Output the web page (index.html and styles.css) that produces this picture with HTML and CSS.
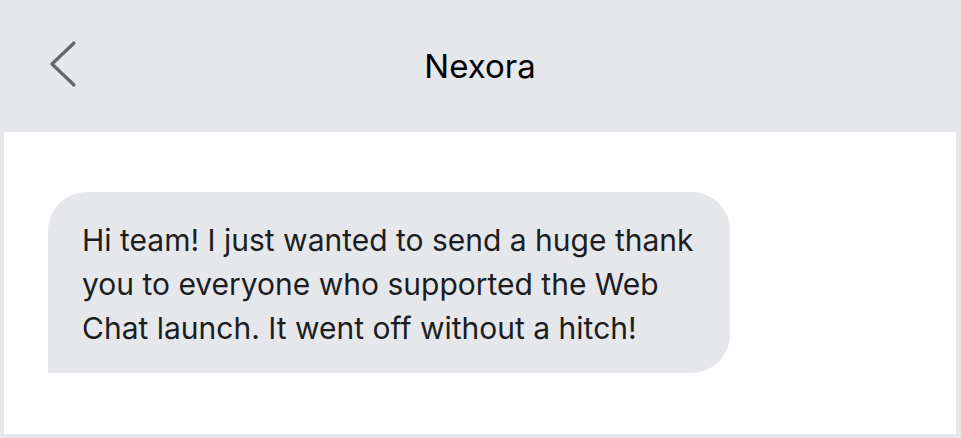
FILE: index.html
```html
<!DOCTYPE html>
<html lang="en">
<head>
<meta charset="utf-8">
<title>Nexora</title>
<link rel="stylesheet" href="styles.css">
</head>
<body>
<div class="app">
  <header class="topbar">
    <button class="back" aria-label="Back">
      <svg width="30" height="50" viewBox="0 0 30 50" fill="none">
        <path d="M26 4 L4 25 L26 46" stroke="#62666d" stroke-width="3.2" stroke-linecap="round" stroke-linejoin="round"/>
      </svg>
    </button>
    <h1 class="title">Nexora</h1>
  </header>
  <main class="chat">
    <div class="bubble">Hi team! I just wanted to send a huge thank you to everyone who supported the Web Chat launch. It went off without a hitch!</div>
  </main>
</div>
</body>
</html>
```
FILE: styles.css
```css
* { box-sizing: border-box; }
html, body { margin: 0; padding: 0; height: 100%; }
body {
  background: #e5e7eb;
  font-family: Inter, "Noto Sans", sans-serif;
  color: #1c1d1f;
}
.app {
  display: flex;
  flex-direction: column;
  height: 100%;
  padding: 0 5px 4px 4px;
}
.topbar {
  height: 132px;
  display: flex;
  align-items: center;
  justify-content: center;
  position: relative;
  flex: none;
}
.back {
  position: absolute;
  left: 44px;
  top: 39px;
  background: none;
  border: 0;
  padding: 0;
  margin: 0;
  display: flex;
}
.title {
  margin: 0;
  font-size: 33px;
  font-weight: 400;
  color: #000;
}
.chat {
  flex: 1;
  background: #fff;
  padding: 60px 44px;
}
.bubble {
  width: 682px;
  background: #e5e7eb;
  border-radius: 38px 38px 38px 0;
  padding: 26px 26px 23px 34px;
  font-size: 30px;
  line-height: 44px;
  color: #1c1d1f;
}
```
